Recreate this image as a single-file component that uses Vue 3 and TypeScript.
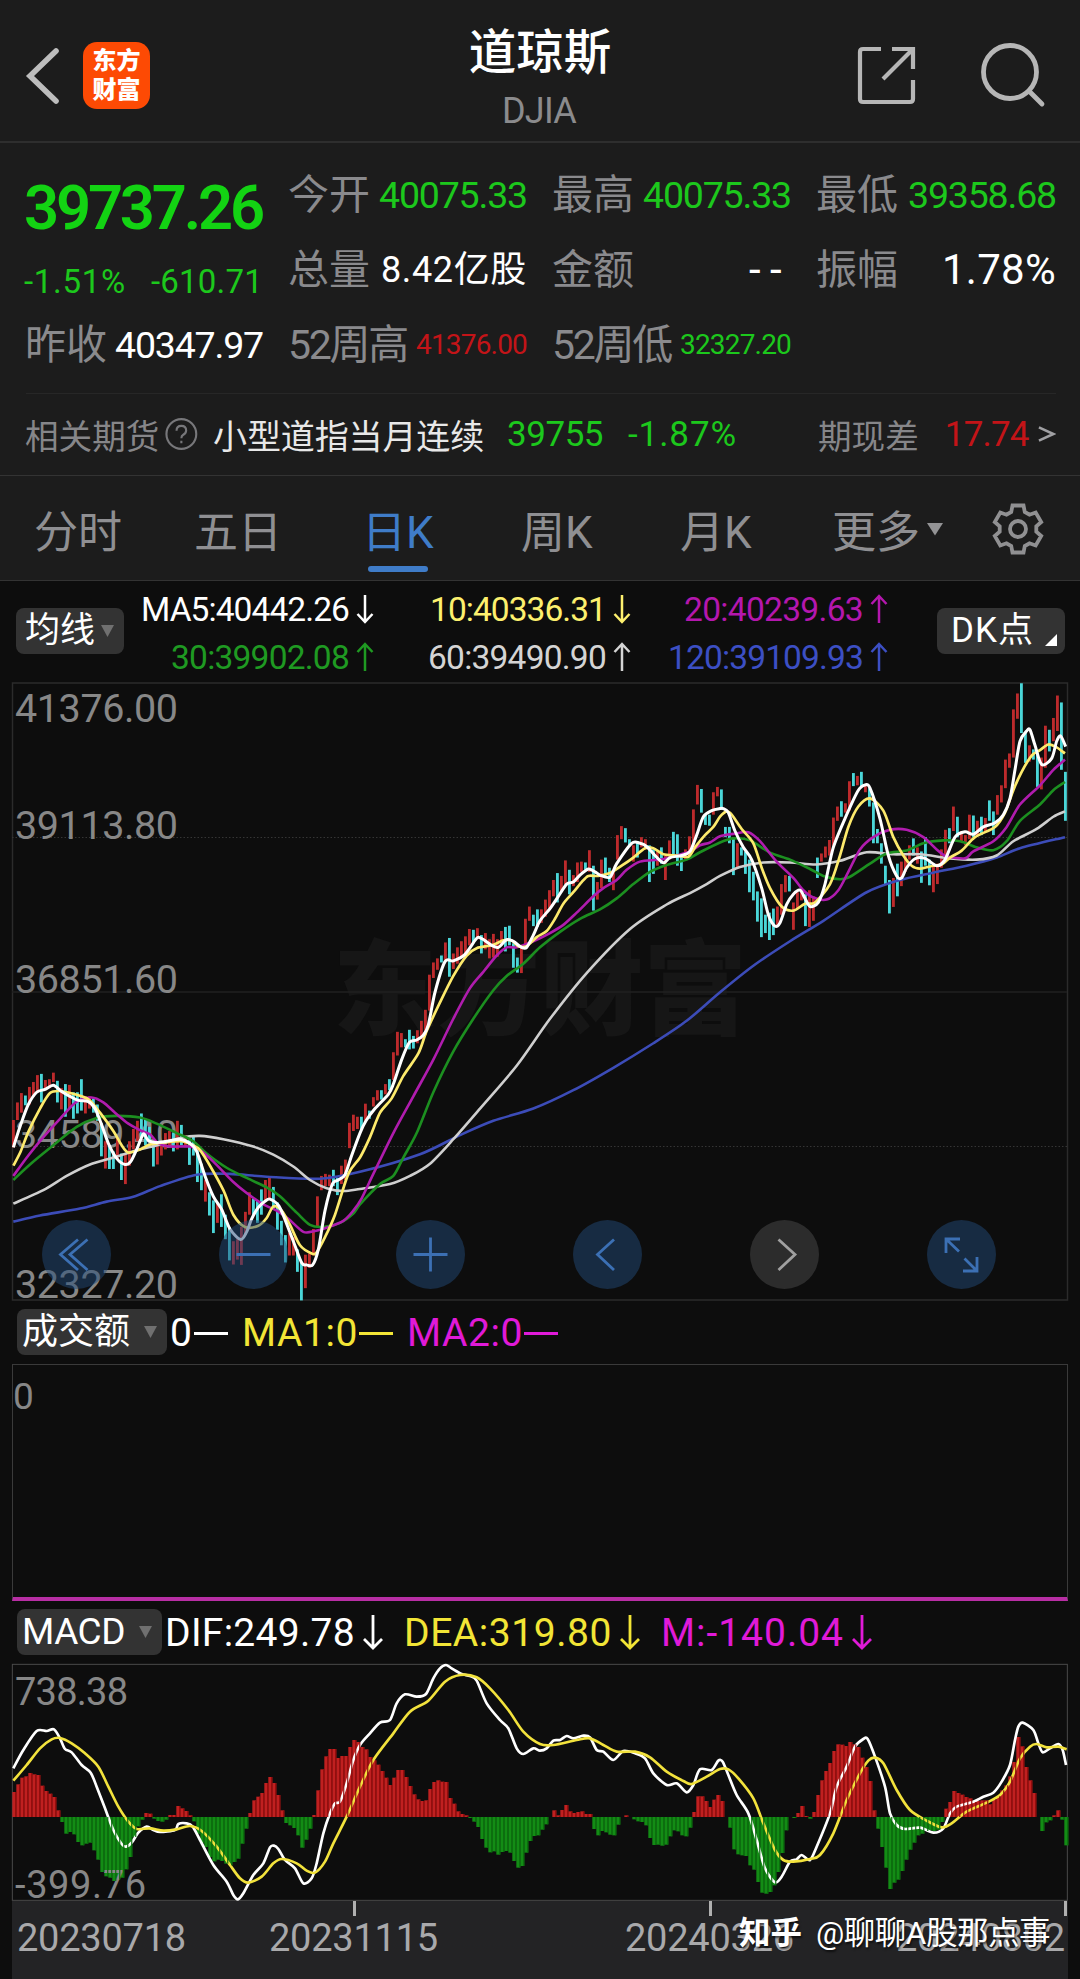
<script setup lang="ts">
type Pair = [number, number]

/* Spreads a text over a given advance width by adjusting its letter spacing. */
const vFit = {
  mounted(el: HTMLElement, binding: { value: number }) {
    const range = document.createRange()
    range.selectNodeContents(el)
    const natural = range.getBoundingClientRect().width
    const count = (el.textContent ?? '').length
    el.style.letterSpacing = `${((binding.value - natural) / count).toFixed(3)}px`
    el.style.width = `${binding.value}px`
  },
}

const tabs = [
  { label: '分时' },
  { label: '五日' },
  { label: '日K', active: true },
  { label: '周K' },
  { label: '月K' },
]

const averages = [
  [
    { text: 'MA5:40442.26', width: 208, up: false, color: '#ffffff' },
    { text: '30:39902.08', width: 178, up: true, color: '#1f9a22' },
  ],
  [
    { text: '10:40336.31', width: 176, up: false, color: '#fdf06e' },
    { text: '60:39490.90', width: 178, up: true, color: '#d4d4d4' },
  ],
  [
    { text: '20:40239.63', width: 179, up: true, color: '#b417ae' },
    { text: '120:39109.93', width: 195, up: true, color: '#3c4fc4' },
  ],
]

/* Daily ranges: direction, top, bottom. */
const candleText = `
R1078 1145,R1035 1078,R1012 1060,C1018 1042,R997 1040,R985 1020,R968 1010,C965 1035,R980 1005,R978 1000,R962 985,C982 1035,
R1000 1052,C990 1070,R992 1050,C1010 1075,C1010 1062,C978 1055,R1020 1062,R1020 1050,C1025 1060,C1040 1080,C1085 1167,
R1130 1197,C1140 1198,C1155 1198,R1120 1175,C1160 1225,R1160 1235,R1130 1190,R1100 1150,R1080 1130,C1062 1120,C1075 1140,
C1095 1130,C1130 1192,R1135 1187,R1130 1165,R1110 1150,R1105 1140,C1110 1155,R1080 1150,C1090 1140,R1115 1145,C1125 1188,
C1115 1165,C1150 1230,C1185 1250,R1225 1278,C1255 1312,C1275 1355,R1280 1330,C1260 1340,C1310 1370,C1340 1422,R1375 1432,
R1370 1420,R1340 1433,R1303 1360,R1255 1310,C1270 1310,C1275 1330,C1248 1310,R1225 1275,R1220 1270,C1242 1295,C1280 1347,
C1325 1385,C1360 1427,R1355 1410,R1365 1410,C1395 1450,C1425 1520,R1408 1490,R1405 1440,R1345 1410,R1265 1340,R1215 1250,
R1210 1240,R1212 1240,C1200 1240,C1220 1262,R1190 1235,R1175 1225,R1085 1147,R1065 1105,R1070 1100,C1070 1100,R1038 1080,
C1055 1075,R1022 1045,R1005 1030,C1005 1028,R990 1015,C978 1005,R912 980,R862 920,R865 900,C880 900,C857 905,C872 903,
R858 890,R835 880,R808 870,R722 810,R692 730,R682 710,C675 692,R643 690,C632 727,R670 708,R655 695,R640 680,R628 670,
R610 650,C612 645,R608 635,C625 670,R620 660,R635 682,R622 680,R635 678,R615 650,C605 665,C602 650,C645 705,C680 717,
R655 718,R585 650,R555 590,C575 603,C562 605,R562 595,R538 580,R515 560,R490 530,C473 545,R480 520,R442 500,C465 525,
R478 505,R447 495,R445 470,C447 465,R417 470,C455 565,R495 538,R440 510,C435 475,C460 495,R470 515,R380 440,R358 390,
C363 398,C390 408,R405 445,C395 435,R385 410,R390 415,C405 495,C415 475,R420 455,C410 450,R430 490,R393 440,C372 435,
C378 455,C425 468,R415 440,R383 430,R317 410,R257 305,C267 325,C330 355,C330 357,R275 330,R262 285,C268 318,C360 385,
C360 400,C385 478,R400 460,C410 430,C420 475,C440 520,C470 540,C518 592,C535 630,C575 620,C570 637,C560 625,R555 600,
R500 575,R478 520,C480 518,R545 612,R520 560,R515 540,C525 603,R515 605,R530 590,C435 485,R425 445,R408 435,R392 430,
R337 410,R310 345,C297 335,R302 325,R248 320,C228 260,R235 258,C225 260,R255 275,C265 310,C300 400,C365 400,C400 450,
C455 500,C490 572,R485 556,C450 530,R445 505,R430 470,R405 440,C388 430,R410 450,C420 497,C385 455,C440 503,R450 520,
R450 500,R415 460,R367 430,C363 400,R310 370,C335 385,R370 395,R380 405,R330 390,C332 385,R345 380,C335 380,R338 370,
C295 345,C322 380,R282 330,R258 300,R195 265,R180 215,R72 190,R33 95,C8 130,C130 203,R160 200,C170 195,C180 262,
R190 268,R112 215,C122 175,R93 150,R38 125,C55 220,C225 345`

const candles = candleText
  .split(',')
  .map((item) => item.trim())
  .map((item, i) => {
    const [top, bottom] = item.slice(1).split(' ').map(Number)
    return { x: 36 + i * 12, top, height: bottom - top, up: item[0] === 'R' }
  })

function points(text: string): Pair[] {
  return text.trim().split(/\s+/).map((p) => p.split(',').map(Number) as Pair)
}

/* Catmull-Rom spline through the points, as cubic segments. */
function curve(text: string): string {
  const p = points(text)
  let d = `M${p[0][0]} ${p[0][1]}`
  for (let i = 0; i < p.length - 1; i++) {
    const a = p[Math.max(0, i - 1)]
    const b = p[i]
    const c = p[i + 1]
    const e = p[Math.min(p.length - 1, i + 2)]
    const f = 7
    d += `C${(b[0] + (c[0] - a[0]) / f).toFixed(1)} ${(b[1] + (c[1] - a[1]) / f).toFixed(1)} `
    d += `${(c[0] - (e[0] - b[0]) / f).toFixed(1)} ${(c[1] - (e[1] - b[1]) / f).toFixed(1)} ${c[0]} ${c[1]}`
  }
  return d
}

const maLines = [
  {
    color: '#3c4cb8',
    width: 2.6,
    d: curve(`40,1327 120,1312 240,1295 320,1278 400,1266 480,1240 590,1212 690,1210 800,1217 960,1222 1080,1205 1260,1162
      1380,1115 1480,1080 1600,1050 1720,1005 1840,950 1960,890 2060,835 2160,765 2260,700 2370,640 2470,590 2600,520
      2700,490 2800,472 2900,455 2990,435 3060,412 3195,385`),
  },
  {
    color: '#cfcfcf',
    width: 2.6,
    d: curve(`40,1283 130,1250 200,1215 270,1187 340,1170 410,1152 480,1138 540,1122 600,1117 670,1125 760,1143 820,1163
      880,1192 930,1225 980,1245 1030,1252 1080,1247 1170,1235 1230,1215 1290,1185 1360,1125 1440,1050 1550,945 1650,830
      1760,718 1890,610 2000,550 2070,522 2120,500 2160,480 2220,458 2290,447 2370,447 2450,452 2520,443 2600,422
      2680,427 2760,427 2850,437 2930,440 2990,430 3040,395 3110,365 3160,335 3195,322`),
  },
  {
    color: '#1c8f20',
    width: 2.6,
    d: curve(`40,1225 90,1187 160,1140 230,1095 290,1073 350,1068 420,1072 470,1087 530,1110 580,1130 620,1160 680,1195
      740,1220 800,1243 840,1265 890,1305 930,1335 970,1340 1020,1330 1060,1307 1080,1285 1140,1235 1180,1215 1210,1170
      1250,1110 1300,1010 1360,910 1420,830 1480,760 1520,725 1570,695 1620,655 1680,617 1740,585 1800,562 1850,535
      1900,500 1950,470 2000,453 2060,440 2100,422 2160,398 2200,388 2250,393 2310,423 2370,440 2430,463 2470,480
      2520,488 2550,482 2610,450 2660,425 2720,418 2770,400 2830,393 2880,395 2930,410 2980,417 3020,395 3060,345
      3120,305 3160,270 3195,250`),
  },
  {
    color: '#b01cae',
    width: 2.6,
    d: curve(`40,1215 85,1165 130,1120 180,1075 230,1033 275,1023 310,1035 345,1060 385,1087 425,1105 450,1113 475,1135
      510,1143 570,1143 600,1152 640,1180 700,1230 740,1257 790,1285 830,1300 865,1320 910,1352 945,1350 980,1342
      1030,1325 1060,1300 1085,1270 1120,1210 1180,1110 1240,1020 1300,930 1360,830 1410,755 1450,715 1490,675 1520,655
      1550,655 1600,640 1650,620 1690,600 1730,570 1780,530 1810,510 1850,490 1880,465 1920,445 1980,440 2030,430
      2070,420 2100,405 2130,398 2160,383 2200,377 2245,373 2280,395 2330,445 2380,485 2410,515 2440,533 2480,538
      2515,515 2545,470 2580,415 2620,385 2670,367 2720,367 2770,385 2810,415 2840,432 2895,437 2920,420 2980,395
      3020,360 3060,305 3120,258 3160,220 3195,195`),
  },
  {
    color: '#fdea6c',
    width: 2.7,
    d: curve(`40,1190 62,1155 85,1107 120,1050 150,1012 180,1007 210,1012 245,1020 270,1030 300,1060 340,1105 365,1140
      385,1158 420,1150 450,1138 500,1132 545,1130 580,1140 600,1152 630,1190 670,1250 700,1310 735,1340 775,1337
      800,1318 820,1290 845,1300 870,1335 900,1385 935,1405 950,1402 975,1365 1005,1310 1045,1210 1080,1170 1110,1120
      1140,1060 1175,1025 1210,970 1255,915 1280,860 1320,790 1360,725 1400,675 1430,657 1475,650 1510,638 1535,638
      1555,652 1580,652 1610,630 1640,615 1665,585 1690,548 1720,520 1745,495 1765,480 1795,480 1830,473 1865,455
      1900,435 1935,412 1960,412 1990,427 2030,430 2065,433 2085,410 2115,380 2140,360 2160,335 2180,322 2195,330
      2225,365 2260,400 2285,460 2310,510 2345,555 2380,565 2415,548 2445,545 2490,500 2520,430 2545,360 2575,310
      2610,290 2650,320 2680,385 2710,430 2735,455 2760,462 2800,455 2825,452 2850,435 2885,418 2925,385 2985,360
      3015,325 3040,270 3065,225 3095,185 3120,172 3145,158 3170,165 3195,180`),
  },
  {
    color: '#ffffff',
    width: 3,
    d: curve(`40,1145 64,1085 85,1040 110,1010 135,1003 160,993 185,1008 210,1020 235,1030 265,1033 285,1050 305,1090
      325,1135 350,1172 375,1187 392,1180 410,1150 425,1120 432,1112 445,1128 470,1133 500,1130 540,1125 570,1135
      590,1155 615,1215 640,1265 665,1297 690,1345 722,1371 740,1352 755,1320 775,1292 795,1277 810,1272 835,1287
      850,1312 880,1375 905,1428 920,1433 938,1433 955,1395 975,1300 997,1235 1015,1225 1035,1212 1055,1165 1080,1110
      1098,1080 1125,1050 1165,1015 1180,990 1205,930 1228,888 1250,882 1270,870 1285,845 1305,765 1335,690 1360,688
      1395,672 1425,638 1435,630 1450,636 1475,650 1495,655 1520,636 1540,640 1565,655 1580,655 1600,625 1620,590
      1650,560 1675,530 1700,500 1720,495 1740,478 1765,463 1785,470 1800,478 1830,483 1850,450 1895,400 1920,400
      1940,408 1965,430 1990,448 2010,435 2045,430 2070,420 2090,380 2110,335 2135,320 2160,315 2170,315 2185,325
      2205,370 2230,410 2255,440 2285,510 2305,575 2325,603 2340,595 2360,550 2380,525 2400,515 2415,535 2430,555
      2455,545 2475,500 2500,410 2540,330 2575,270 2595,257 2610,265 2640,340 2665,430 2690,480 2705,485 2720,460
      2745,438 2775,437 2810,455 2835,440 2865,385 2895,372 2920,378 2950,360 2985,350 3010,330 3030,290 3045,220
      3060,150 3080,125 3090,122 3105,160 3125,207 3155,192 3170,150 3182,137 3197,163`),
  },
]

const priceScale = [
  { text: '41376.00', y: 42 },
  { text: '39113.80', y: 159 },
  { text: '36851.60', y: 313 },
  { text: '34589.40', y: 468 },
  { text: '32327.20', y: 618 },
]

const histogram = [
  75, 98, 118, 122, 132, 128, 126, 94, 78, 70, 60, 20, -15, -50, -45, -52, -75, -85, -80, -77, -100, -128, -165, -178,
  -182, -192, -187, -182, -157, -120, -60, -28, -8, 12, 10, -5, -12, -14, -8, 6, 6, 33, 26, 18, 5, -13, -50, -78, -90,
  -120, -133, -128, -132, -140, -145, -135, -125, -80, -35, 12, 50, 61, 72, 102, 120, 102, 66, 20, -18, -25, -33, -55,
  -92, -68, -35, 6, 80, 143, 182, 204, 204, 177, 183, 183, 210, 231, 225, 210, 203, 180, 170, 157, 138, 118, 96, 118,
  141, 141, 120, 93, 68, 53, 48, 50, 84, 105, 110, 106, 105, 57, 40, 17, 9, 5, -3, -14, -30, -66, -92, -106, -103,
  -113, -105, -102, -107, -132, -152, -147, -107, -72, -57, -55, -38, -22, 0, 20, 5, 21, 36, 17, 12, 15, 17, 9, 9, -36,
  -55, -42, -46, -53, -55, -23, 0, 5, 0, -7, -13, -15, -25, -63, -84, -83, -86, -83, -58, -40, -43, -55, -58, -32, 15,
  62, 62, 48, 30, 52, 66, 48, 0, -32, -97, -112, -115, -117, -145, -158, -195, -227, -230, -225, -205, -165, -108, -40,
  0, -3, 12, 33, 3, -5, 15, 66, 110, 138, 162, 198, 218, 217, 213, 225, 218, 210, 178, 150, 108, 20, -35, -90, -152,
  -216, -197, -188, -162, -128, -98, -77, -55, -50, -42, -40, -42, -38, -15, 25, 45, 78, 72, 67, 60, 56, 45, 48, 50, 50,
  38, 52, 62, 80, 95, 122, 165, 240, 212, 150, 110, 72, 0, -42, -16, -10, 5, 20, -8, -85,
]
const bars = histogram.map((v, i) => ({ x: 37 + i * 12, y: v > 0 ? 501 - v : 501, h: Math.abs(v), up: v > 0 }))

const dif = curve(`40,355 70,300 110,243 140,243 162,238 180,265 195,297 215,307 245,345 272,368 290,410 315,475 340,540
  365,582 378,590 395,578 415,548 440,530 460,540 480,546 525,540 535,522 560,520 578,530 600,570 640,645 680,695
  700,735 714,748 730,730 760,675 790,640 810,592 822,587 835,597 855,630 885,655 910,700 935,685 950,640 970,550
  990,490 1005,460 1020,455 1040,400 1060,330 1080,285 1110,250 1140,218 1170,210 1190,160 1215,133 1250,140 1278,132
  1300,85 1320,55 1338,45 1355,55 1385,72 1410,78 1430,92 1460,160 1500,210 1525,235 1550,295 1570,312 1600,295
  1620,302 1640,295 1660,272 1680,270 1700,258 1720,265 1750,257 1770,262 1790,300 1810,305 1840,330 1870,303 1905,310
  1935,325 1960,370 2000,405 2030,400 2060,427 2080,405 2100,358 2135,360 2155,332 2168,335 2185,375 2210,435 2245,490
  2270,570 2295,655 2325,697 2345,680 2370,635 2390,628 2405,615 2430,630 2450,590 2490,490 2510,410 2540,350 2565,290
  2590,267 2603,267 2625,320 2655,410 2670,490 2690,525 2715,537 2760,533 2800,548 2830,535 2850,490 2870,470 2920,455
  2950,440 2980,428 3005,395 3030,345 3045,270 3055,230 3068,218 3100,240 3115,280 3128,307 3150,295 3175,282 3188,300
  3198,345`)
const dea = curve(`40,392 80,345 120,295 155,268 180,264 215,280 255,310 295,350 325,410 355,470 385,515 410,537 450,535
  490,542 530,538 570,528 605,543 650,590 690,645 720,685 745,698 785,680 820,640 845,627 890,640 920,662 945,668
  975,635 1000,580 1040,500 1080,410 1120,330 1180,250 1230,185 1285,152 1335,95 1380,75 1430,82 1470,115 1525,180
  1570,245 1620,282 1660,285 1730,270 1770,265 1810,285 1850,305 1905,305 1950,322 2000,365 2050,393 2075,402 2120,380
  2160,357 2185,358 2215,385 2260,445 2290,520 2325,600 2350,630 2380,635 2430,627 2460,615 2500,550 2540,450 2580,370
  2605,332 2625,323 2650,340 2690,420 2730,480 2780,512 2825,532 2855,520 2900,485 2960,458 3000,435 3030,395 3060,325
  3090,290 3110,282 3140,292 3175,290 3200,298`)

const controls = [
  { name: 'first', d: 'M36 19.500L18.500 34.500L36 50M45.500 19.500L28 34.500L45.500 50', color: '#3c70b4' },
  { name: 'minus', d: 'M17.500 34.500H51.500', color: '#3c70b4' },
  { name: 'plus', d: 'M17.500 34.500H51.500M34.500 17.500V51.500', color: '#3c70b4' },
  { name: 'prev', d: 'M41 19.500L24.500 34.500L41 50', color: '#3c70b4' },
  { name: 'next', d: 'M28.500 19.500L45 34.500L28.500 50', color: '#a0a0a0', dim: true },
  { name: 'expand', d: 'M33 19H19V33M19.500 19.500L32 31.500M50 37V51H36M49.500 50.500L37.500 38.500', color: '#3c70b4' },
]
</script>

<template>
  <main class="page">
    <header class="top">
      <svg class="back" width="36" height="56" viewBox="0 0 36 56">
        <path d="M31 3L5 28L31 53" fill="none" stroke="#bdbdbd" stroke-width="5.600" stroke-linecap="round" />
      </svg>
      <div class="logo"><span>东方</span><span>财富</span></div>
      <div class="title">
        <h1>道琼斯</h1>
        <p v-fit="74">DJIA</p>
      </div>
      <svg class="share" width="62" height="62" viewBox="0 0 62 62" fill="none" stroke="#b6b6b6" stroke-width="4.200">
        <path d="M25 4H7Q4 4 4 7V54Q4 57 7 57H54Q57 57 57 54V35M36 4H57V24M56 5L27 34" />
      </svg>
      <svg class="search" width="68" height="66" viewBox="0 0 68 66" fill="none" stroke="#b6b6b6" stroke-width="4.800">
        <circle cx="30" cy="29" r="26.500" />
        <path d="M49 48L62 61" stroke-linecap="round" />
      </svg>
    </header>

    <section class="quote">
      <div class="grid">
        <div class="lead">
          <strong v-fit="238">39737.26</strong>
          <div class="change"><span v-fit="102">-1.51%</span><span v-fit="112">-610.71</span></div>
        </div>
        <div class="cell c2 r1"><label>今开</label><b v-fit="148" class="down">40075.33</b></div>
        <div class="cell c3 r1"><label>最高</label><b v-fit="148" class="down">40075.33</b></div>
        <div class="cell c4 r1"><label>最低</label><b v-fit="148" class="down">39358.68</b></div>
        <div class="cell c2 r2"><label>总量</label><b v-fit="146" class="mid">8.42亿股</b></div>
        <div class="cell c3 r2"><label>金额</label><b v-fit="42" class="big">--</b></div>
        <div class="cell c4 r2"><label>振幅</label><b v-fit="114" class="big">1.78%</b></div>
        <div class="cell c1 r3"><label>昨收</label><b v-fit="148">40347.97</b></div>
        <div class="cell c2 r3"><label v-fit="119">52周高</label><b v-fit="111" class="small up">41376.00</b></div>
        <div class="cell c3 r3"><label v-fit="119">52周低</label><b v-fit="111" class="small down">32327.20</b></div>
      </div>
      <div class="related">
        <span class="gray">相关期货</span>
        <svg class="help" width="34" height="34" viewBox="0 0 34 34" fill="none" stroke="#77777a" stroke-width="2.200">
          <circle cx="17" cy="17" r="15.500" />
          <path d="M12 13.500Q12 8.500 17 8.500T22 13.300Q22 16 19 17.800Q17 19 17 21.500M17 24V26.500" />
        </svg>
        <span class="name" v-fit="271">小型道指当月连续</span>
        <span v-fit="96" class="down price">39755</span>
        <span v-fit="109" class="down pct">-1.87%</span>
        <span class="gray basis">期现差</span>
        <span v-fit="84" class="up diff">17.74</span>
        <svg class="more" width="20" height="22" viewBox="0 0 20 22">
          <path d="M2 4L17 11L2 18" fill="none" stroke="#a0a0a3" stroke-width="2.600" />
        </svg>
      </div>
    </section>

    <nav class="tabs">
      <span
        v-for="tab in tabs"
        :key="tab.label"
        class="tab"
        :class="{ active: tab.active }"
      >{{ tab.label }}</span>
      <span class="tab more-tab">更多</span>
      <svg class="caret" width="16" height="14" viewBox="0 0 16 14"><path d="M0 1H16L8 13.500Z" fill="#939395" /></svg>
      <svg class="gear" width="54" height="54" viewBox="-27 -27 54 54" fill="none" stroke="#909092" stroke-width="3.800" stroke-linejoin="miter">
        <path d="M-5.500 -23.500H5.500L6.800 -17L11.500 -14.300L17.700 -16.500L23.200 -7L18.300 -2.700V2.700L23.200 7L17.700 16.500L11.500 14.300L6.800 17L5.500 23.500H-5.500L-6.800 17L-11.500 14.300L-17.700 16.500L-23.200 7L-18.300 2.700V-2.700L-23.200 -7L-17.700 -16.500L-11.500 -14.300L-6.800 -17Z" />
        <circle r="8" />
      </svg>
    </nav>

    <section class="legend">
      <div class="chip ma-chip">均线<svg width="14" height="12" viewBox="0 0 14 12"><path d="M0 0H13L6.500 12Z" fill="#707070" /></svg></div>
      <div v-for="(column, c) in averages" :key="c" class="ma-col" :class="`ma-col-${c}`">
        <div v-for="item in column" :key="item.text" class="ma" :style="{ color: item.color }">
          <span v-fit="item.width">{{ item.text }}</span>
          <svg width="18" height="30" viewBox="0 0 18 30" fill="none" stroke="currentColor" stroke-width="2.500">
            <path :d="item.up ? 'M9 29V2M1.500 10L9 2L16.500 10' : 'M9 1V28M1.500 20L9 28L16.500 20'" />
          </svg>
        </div>
      </div>
      <div class="chip dk-chip"><span v-fit="47">DK</span>点<svg width="12" height="12" viewBox="0 0 12 12"><path d="M12 0V12H0Z" fill="#fff" /></svg></div>
    </section>

    <section class="price-chart">
      <div class="brand">东方财富</div>
      <svg class="plot" width="1080" height="623" viewBox="0 0 1080 623">
        <g fill="none" stroke="#2b2b2b" stroke-width="1.500">
          <rect x="12.500" y="3" width="1055" height="617" />
          <path d="M12 312H1067" stroke="#202020" />
          <path d="M12 157.500H1067M12 466.500H1067" stroke="#353535" stroke-width="1" stroke-dasharray="1.500 2" />
        </g>
        <g class="scale">
          <text v-for="label in priceScale" :key="label.text" x="15" :y="label.y" textLength="163">{{ label.text }}</text>
        </g>
        <svg width="1080" height="623" viewBox="0 0 3240 1526.350" preserveAspectRatio="none">
          <rect
            v-for="(bar, i) in candles"
            :key="i"
            :x="bar.x"
            :y="bar.top"
            width="8.500"
            :height="bar.height"
            :fill="bar.up ? '#bd2a2c' : '#4ad6d8'"
          />
          <path
            v-for="line in maLines"
            :key="line.color"
            :d="line.d"
            fill="none"
            :stroke="line.color"
            :stroke-width="line.width"
            vector-effect="non-scaling-stroke"
            stroke-linejoin="round"
          />
        </svg>
      </svg>
      <div class="controls">
        <svg
          v-for="control in controls"
          :key="control.name"
          width="69"
          height="69"
          viewBox="0 0 69 69"
        >
          <circle cx="34.500" cy="34.500" r="34.500" :fill="control.dim ? 'rgba(80,80,80,.48)' : 'rgba(34,74,120,.5)'" />
          <path :d="control.d" fill="none" :stroke="control.color" stroke-width="2.800" />
        </svg>
      </div>
    </section>

    <section class="readout volume-head">
      <div class="chip vol-chip">成交额<svg width="14" height="12" viewBox="0 0 14 12"><path d="M0 0H13L6.500 12Z" fill="#707070" /></svg></div>
      <span class="v0"><i v-fit="22">0</i><i class="dash"></i></span>
      <span class="v1 yellow"><i v-fit="116">MA1:0</i><i class="dash"></i></span>
      <span class="v2 magenta"><i v-fit="116">MA2:0</i><i class="dash"></i></span>
    </section>
    <section class="volume"><span>0</span></section>

    <section class="readout macd-head">
      <div class="chip macd-chip"><span v-fit="103">MACD</span><svg width="14" height="12" viewBox="0 0 14 12"><path d="M0 0H13L6.500 12Z" fill="#707070" /></svg></div>
      <span class="m0"><i v-fit="190">DIF:249.78</i><svg class="arrow" width="22" height="36" viewBox="0 0 22 36"><path d="M11 0V33M2 24L11 33L20 24" /></svg></span>
      <span class="m1 yellow"><i v-fit="208">DEA:319.80</i><svg class="arrow" width="22" height="36" viewBox="0 0 22 36"><path d="M11 0V33M2 24L11 33L20 24" /></svg></span>
      <span class="m2 magenta"><i v-fit="183">M:-140.04</i><svg class="arrow" width="22" height="36" viewBox="0 0 22 36"><path d="M11 0V33M2 24L11 33L20 24" /></svg></span>
    </section>

    <section class="macd">
      <svg class="plot" width="1080" height="252" viewBox="0 0 1080 252">
        <svg width="1080" height="252" viewBox="0 0 3240 756">
          <rect x="37" y="43" width="3165" height="708" fill="none" stroke="#4a4a4a" stroke-width="3" />
          <rect v-for="(bar, i) in bars" :key="i" :x="bar.x" :y="bar.y" width="12" :height="bar.h" :fill="bar.up ? '#c02020' : '#138c15'" />
        </svg>
        <g class="scale">
          <text x="15" y="55" textLength="113">738.38</text>
          <text x="15" y="248" textLength="131">-399.76</text>
        </g>
        <svg width="1080" height="252" viewBox="0 0 3240 756" fill="none" stroke-width="8" stroke-linejoin="round">
          <path :d="dif" stroke="#fff" />
          <path :d="dea" stroke="#f2e23c" />
          <g stroke="none">
            <rect v-for="(bar, i) in bars" :key="i" :x="bar.x + 8.500" :y="bar.y" width="3.500" :height="bar.h" :fill="bar.up ? '#8c0a0a' : '#0a6a0c'" />
          </g>
        </svg>
      </svg>
    </section>

    <footer class="axis">
      <i class="tick t1"></i><i class="tick t2"></i><i class="tick t3"></i>
      <div class="dates">
        <span v-fit="169">20230718</span>
        <span v-fit="169">20231115</span>
        <span v-fit="169">20240326</span>
        <span v-fit="169">20240802</span>
      </div>
      <div class="credit"><b>知乎</b><span v-fit="234">@聊聊A股那点事</span></div>
    </footer>
  </main>
</template>

<style>
body {
  background: #0d0d0d;
}
</style>

<style scoped>
.page {
  width: 1080px;
  height: 1979px;
  overflow: hidden;
  background: #0d0d0d;
  color: #fff;
  font-family: Roboto, "Noto Sans CJK SC", sans-serif;
  font-weight: 400;
  white-space: nowrap;
}
.page span, .page b, .page i, .page strong { font-style: normal; }
.top {
  box-sizing: border-box;
  height: 143px;
  display: flex;
  align-items: flex-start;
  background: #1c1c1c;
  border-bottom: 2px solid #2e2e2e;
}
.back { margin: 48px 0 0 25px; flex: none; }
.logo {
  flex: none;
  width: 67px;
  height: 67px;
  margin: 42px 0 0 22px;
  border-radius: 14px;
  background: #fd4a04;
  display: flex;
  flex-direction: column;
  align-items: center;
  justify-content: center;
  font-weight: 800;
  font-size: 24px;
  line-height: 29px;
}
.title { width: 200px; margin-left: 290px; text-align: center; flex: none; }
.title h1 { margin: 19px 0 0; font-size: 47.500px; line-height: 68px; font-weight: 450; }
.title p { margin: 1px auto 0; font-size: 36px; line-height: 46px; color: #8b8b8d; position: relative; left: -1px; }
.share { margin: 45px 0 0 216px; flex: none; }
.search { margin: 43px 0 0 62px; flex: none; }

.quote { height: 333px; background: #1c1c1c; border-bottom: 1.500px solid #333; box-sizing: border-box; padding: 0 24px 0 26px; }
.grid {
  display: grid;
  box-sizing: border-box;
  height: 251px;
  padding-top: 14px;
  grid-template-columns: 236px 238px 238px 238px;
  column-gap: 26px;
  grid-template-rows: 75px 75px 75px;
  border-bottom: 1.500px solid #272727;
}
.lead { grid-column: 1; grid-row: 1 / 3; color: #13d313; }
.lead strong { display: block; margin: 13px 0 0 -2px; font-size: 61.500px; line-height: 76px; font-weight: 600; }
.change { display: flex; justify-content: space-between; font-size: 33px; line-height: 40px; margin: 16px -1px 0 -2px; color: #1cc81c; }
.cell { display: flex; align-items: center; justify-content: space-between; margin-right: -1px; }
.c1 { grid-column: 1; margin-left: -1px; } .c2 { grid-column: 2; } .c3 { grid-column: 3; } .c4 { grid-column: 4; margin-right: -2px; }
.r1 { grid-row: 1; } .r2 { grid-row: 2; } .r3 { grid-row: 3; }
.cell label { font-size: 41px; color: #8a8a8d; line-height: 60px; }
.cell b { font-size: 37.500px; font-weight: 400; line-height: 60px; }
.cell b.mid { font-size: 36px; }
.cell b.big { font-size: 42px; }
.cell b.small { font-size: 28px; }
.page .down { color: #1cc81c; }
.page .up { color: #c31418; }
.related { display: flex; align-items: center; height: 80px; font-size: 33.600px; }
.gray { color: #868689; margin-left: -1px; }
.help { margin-left: 6px; }
.name { margin-left: 15px; color: #e8e8e8; font-size: 34px; }
.price { margin-left: 23px; font-size: 35px; }
.pct { margin-left: 25px; font-size: 35px; }
.gray.basis { margin-left: 81px; }
.diff { margin-left: 26px; font-size: 35px; }
.more { margin-left: 8px; }

.tabs { height: 105px; box-sizing: border-box; background: #1c1c1c; border-bottom: 1.500px solid #333; display: flex; align-items: flex-start; padding-left: 34px; }
.tab { font-size: 44px; line-height: 62px; height: 96px; padding-top: 26px; box-sizing: border-box; color: #8f8f92; width: 158px; position: relative; flex: none; }
.tab:nth-child(2) { padding-left: 2px; }
.tab:nth-child(3) { width: 155px; padding-left: 10px; margin-left: 2px; }
.tab:nth-child(4) { margin-left: 14px; }
.tab:nth-child(5) { margin-left: 1px; }
.tab.active { color: #3f7cc8; }
.tab.active::after { content: ""; position: absolute; left: 16px; bottom: 0; width: 60px; height: 6px; border-radius: 3px; background: #3f7cc8; }
.more-tab { width: 88px; margin-left: -6px; }
.caret { margin: 46px 0 0 7px; flex: none; }
.gear { margin: 26px 0 0 48px; flex: none; }

.legend { height: 99px; display: flex; align-items: flex-start; }
.chip { box-sizing: border-box; height: 46px; border-radius: 8px; background: #333; display: flex; align-items: center; font-size: 35px; line-height: 46px; flex: none; }
.chip svg { flex: none; }
.ma-chip { width: 108px; margin: 27px 0 0 16px; padding-left: 9px; font-size: 35px; }
.ma-chip svg { margin-left: 6px; }
.ma-col { flex: none; padding-top: 4px; display: flex; flex-direction: column; align-items: flex-end; }
.ma-col-0 { width: 250px; }
.ma-col-1 { width: 257px; }
.ma-col-2 { width: 257px; }
.ma { height: 48px; display: flex; align-items: center; font-size: 33.500px; }
.ma svg { margin-left: 7px; }
.dk-chip { width: 128px; margin: 27px 0 0 49px; padding-left: 14px; font-size: 35px; }
.dk-chip svg { margin: 18px 0 0 12px; }

.price-chart { position: relative; height: 623px; }
.plot { display: block; position: relative; }
.brand { position: absolute; left: 333px; top: 237px; font-size: 103.500px; line-height: 150px; font-weight: 900; color: #161616; }
.scale text { font-size: 39.500px; fill: #878787; }
.controls { position: absolute; left: 42px; right: 84px; top: 540px; display: flex; justify-content: space-between; }

.readout { display: flex; align-items: flex-start; font-size: 39px; line-height: 48px; }
.readout > span { display: flex; align-items: center; height: 48px; flex: none; }
.volume-head { height: 61px; padding: 6px 0 0 17px; box-sizing: border-box; }
.vol-chip { width: 150px; padding-left: 5px; font-size: 36px; }
.vol-chip svg { margin-left: 14px; }
.dash { width: 34px; height: 3px; background: currentColor; }
.v0 { margin-left: 3px; }
.v1, .v2 { margin-left: 14px; }
.v1 i + i, .v2 i + i { margin-left: 1px; }
.v0 i + i { margin-left: 2px; }
.yellow { color: #f2e536; }
.magenta { color: #e01ad8; }
.volume { box-sizing: border-box; width: 1056px; height: 237px; margin-left: 12px; border: 1.500px solid #3a3a3a; border-bottom: 4px solid #b82ea4; border-right-width: 1.500px; }
.volume span { display: block; margin: 7px 0 0 0; font-size: 37px; line-height: 50px; color: #878787; }
.macd-head { height: 49px; padding: 8px 0 0 17px; box-sizing: border-box; }
.macd-chip { width: 145px; padding-left: 5px; font-size: 37px; }
.macd-chip svg { margin-left: 14px; }
.m0 { margin-left: 3px; }
.m1 { margin-left: 20px; }
.m2 { margin-left: 20px; }
.arrow { margin-left: 7px; fill: none; stroke: currentColor; stroke-width: 2.800; }
.macd { height: 251px; }
.macd .scale text { font-size: 38px; }

.axis { position: relative; margin-left: 12px; width: 1055.500px; height: 80px; background: #232325; box-sizing: border-box; padding-top: 14px; }
.tick { position: absolute; top: 0; width: 3px; height: 15px; background: #b0b0b0; }
.t1 { left: 341px; } .t2 { left: 697px; } .t3 { left: 1052px; }
.dates { display: flex; font-size: 38px; line-height: 46px; color: #a9a9ab; padding-left: 5px; }
.dates span { flex: none; }
.dates span:nth-child(2) { margin-left: 83px; }
.dates span:nth-child(3) { margin-left: 187px; }
.dates span:nth-child(4) { margin-left: 102px; }
.credit { position: absolute; left: 727px; top: 10px; display: flex; font-size: 31.500px; line-height: 46px; text-shadow: 1px 2px 2px rgba(0, 0, 0, .6); }
.credit span { margin-left: 14px; }
</style>
